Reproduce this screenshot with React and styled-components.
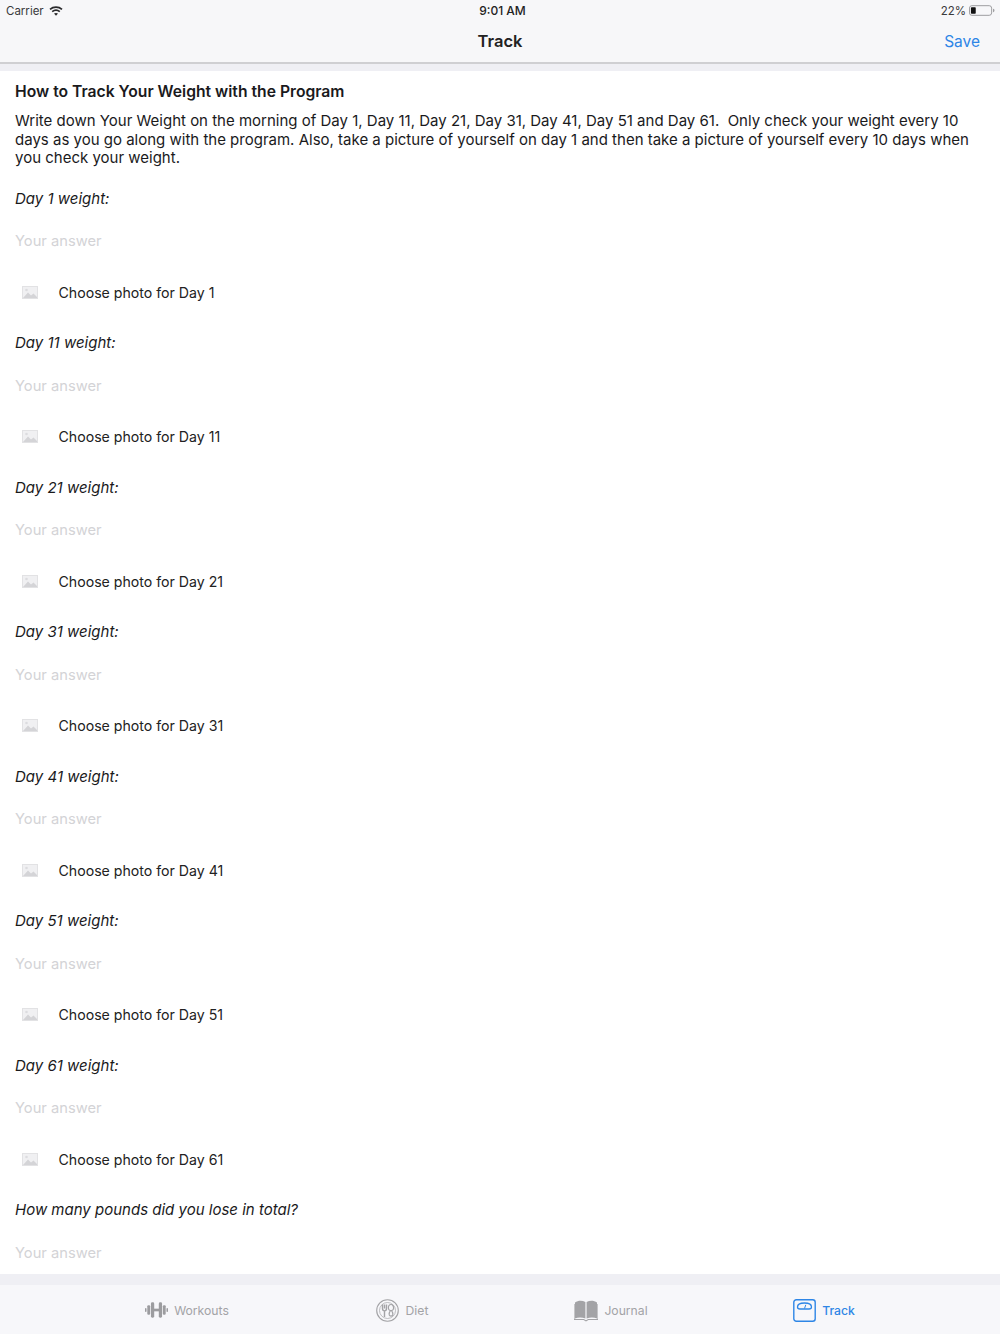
import React from 'react';
import styled, { createGlobalStyle } from 'styled-components';

const Global = createGlobalStyle`
  html, body { margin: 0; padding: 0; background: #fff; }
  * { box-sizing: border-box; }
`;

const Page = styled.div`
  width: 1000px;
  height: 1334px;
  display: flex;
  flex-direction: column;
  overflow: hidden;
  font-family: Inter, "Liberation Sans", sans-serif;
  color: #1a1a1c;
`;

const TopBar = styled.header`
  height: 64px;
  flex: none;
  background: #f7f7f9;
  border-bottom: 2px solid #cfcfd2;
`;

const StatusBar = styled.div`
  height: 20px;
  padding: 1px 5px 0 6px;
  display: grid;
  grid-template-columns: 1fr auto 1fr;
  align-items: center;
  font-size: 11.5px;
  color: #3a3a3c;
`;

const StatusLeft = styled.div`
  display: flex;
  align-items: center;
  gap: 5px;
`;

const StatusTime = styled.div`
  font-size: 12px;
  font-weight: 500;
  color: #222;
  padding-left: 4px;
`;

const StatusRight = styled.div`
  display: flex;
  justify-content: flex-end;
  align-items: center;
  gap: 3px;
`;

const NavRow = styled.div`
  height: 42px;
  padding: 0 20px;
  display: grid;
  grid-template-columns: 1fr auto 1fr;
  align-items: center;
`;

const NavTitle = styled.div`
  font-size: 16.5px;
  font-weight: 600;
  color: #222;
`;

const SaveLink = styled.div`
  justify-self: end;
  font-size: 15.5px;
  color: #2e86e6;
`;

const Band = styled.div`
  height: ${(p) => p.$h}px;
  flex: none;
  background: #efeff4;
`;

const Content = styled.main`
  flex: 1;
  min-height: 0;
  padding: 0 15px;
  overflow: hidden;
  background: #fff;
`;

const Heading = styled.h1`
  margin: 0;
  height: 40px;
  display: flex;
  align-items: center;
  font-size: 15.7px;
  font-weight: 600;
  color: #1a1a1c;
`;

const Intro = styled.p`
  margin: 0;
  padding-top: 1px;
  font-size: 15px;
  line-height: 18.5px;
  height: 65.5px;
  width: 960px;
`;

const Question = styled.div`
  height: 43px;
  display: flex;
  align-items: center;
  font-size: 15px;
  font-style: italic;
`;

const Answer = styled.div`
  height: 43px;
  display: flex;
  align-items: center;
  font-size: 14.7px;
  color: #d3d3d6;
`;

const PhotoRow = styled.div`
  height: 58.5px;
  padding: 1px 0 0 7px;
  display: flex;
  align-items: center;
  gap: 20.5px;
  font-size: 14.15px;
  color: #222;
`;

const TabBar = styled.nav`
  height: 49px;
  flex: none;
  background: #f7f7fa;
  display: grid;
  grid-template-columns: repeat(4, 1fr);
  padding: 1px 71px 0 81px;
`;

const Tab = styled.div`
  display: flex;
  align-items: center;
  justify-content: center;
  padding-left: ${(p) => p.$nudge || 0}px;
  gap: ${(p) => p.$gap}px;
  font-size: 12.2px;
  font-weight: ${(p) => (p.$active ? 500 : 400)};
  color: ${(p) => (p.$active ? '#2e86e6' : '#a3a3a6')};
`;

const Wifi = () => (
  <svg width="14" height="10" viewBox="0 0 14 10" fill="none" stroke="#2a2a2c" strokeWidth="1.7">
    <path d="M1 3.4C4.4 .4 9.6 .4 13 3.4" />
    <path d="M3.2 5.6c2.2-1.800 5.400-1.800 7.600 0" />
    <path d="M7 9.800 5 7.600c1.100-.9 2.900-.9 4 0z" fill="#2a2a2c" stroke="none" />
  </svg>
);

const Battery = () => (
  <svg width="26" height="11" viewBox="0 0 27 11">
    <rect x=".5" y=".5" width="23" height="10" rx="2.5" fill="none" stroke="#9a9a9d" />
    <rect x="2" y="2" width="5" height="7" rx=".8" fill="#111" />
    <path d="M25 3.800c1 .2 1.400.8 1.400 1.700s-.4 1.500-1.400 1.700z" fill="#9a9a9d" />
  </svg>
);

const PhotoIcon = () => (
  <svg width="16" height="13" viewBox="0 0 16 13">
    <rect x=".5" y=".5" width="15" height="12" fill="#f0f0f2" stroke="#e2e2e4" />
    <path d="M1 12 6 6.500 9 9.500 11.500 7.500 15 11v1z" fill="#d4d4d7" />
    <circle cx="4.500" cy="4" r="1.300" fill="#dcdcdf" />
  </svg>
);

const DumbbellIcon = () => (
  <svg width="23" height="20" viewBox="0 0 24 20" fill="#9c9c9f">
    <rect x="0" y="8" width="1.600" height="4" rx=".8" />
    <rect x="2.400" y="5" width="3" height="10" rx="1.200" />
    <rect x="6.200" y="2" width="3.400" height="16" rx="1.400" />
    <rect x="9" y="8.600" width="6" height="2.800" />
    <rect x="14.400" y="2" width="3.400" height="16" rx="1.400" />
    <rect x="18.600" y="5" width="3" height="10" rx="1.200" />
    <rect x="22.400" y="8" width="1.600" height="4" rx=".8" />
  </svg>
);

const PlateIcon = () => (
  <svg width="23" height="23" viewBox="0 0 23 23" fill="none" stroke="#a3a3a6">
    <circle cx="11.500" cy="11.500" r="10.800" strokeWidth="1.100" />
    <circle cx="11.500" cy="11.500" r="8" strokeWidth=".7" />
    <path d="M6.500 5.500v4c0 1.600 1 2.300 2 2.400V18M8.500 5.500v4M10.500 5.500v4c0 1.600-1 2.300-2 2.400" strokeWidth="1.400" />
    <path d="M15 5.500c-1.800 0-2.600 1.800-2.600 3.400 0 1.400.8 2.400 2 2.700-.9 1.200-1.600 2.600-1.100 4.400.5 1.400 2.900 1.400 3.400 0 .5-1.800-.2-3.200-1.100-4.400 1.200-.3 2-1.300 2-2.700 0-1.600-.8-3.400-2.600-3.400z" strokeWidth="1.200" />
  </svg>
);

const BookIcon = () => (
  <svg width="24" height="23" viewBox="0 0 24 23" fill="#a3a3a6">
    <path d="M1 3.500C4 1.500 8 1.300 11.400 3v16.500C8 18 4 18 1 19.500z" />
    <path d="M23 3.500c-3-2-7-2.200-10.400-.5v16.500c3.400-1.500 7.400-1.500 10.400 0z" />
    <path d="M0 5v16h9.500l2.500 1.500 2.500-1.500H24V5h-.6v15h-9.200L12 21.300 9.800 20H.6V5z" />
  </svg>
);

const ScaleIcon = () => (
  <svg width="23" height="23" viewBox="0 0 23 23" fill="none" stroke="#2e86e6">
    <rect x=".8" y=".8" width="21.400" height="21.400" rx="2.500" strokeWidth="1.400" />
    <path d="M4.500 8c0-2.400 3-4 7-4s7 1.600 7 4c0 1.300-1.200 2-2.500 2h-9C5.700 10 4.500 9.300 4.500 8z" strokeWidth="1.300" />
    <path d="M11.500 9.500 12.800 5.800" strokeWidth="1" />
  </svg>
);

const days = [1, 11, 21, 31, 41, 51, 61];

const tabs = [
  { label: 'Workouts', icon: <DumbbellIcon />, gap: 6 },
  { label: 'Diet', icon: <PlateIcon />, gap: 7, nudge: 6 },
  { label: 'Journal', icon: <BookIcon />, gap: 6 },
  { label: 'Track', icon: <ScaleIcon />, gap: 6, nudge: 2, active: true },
];

export default function App() {
  return (
    <Page>
      <Global />
      <TopBar>
        <StatusBar>
          <StatusLeft>Carrier <Wifi /></StatusLeft>
          <StatusTime>9:01 AM</StatusTime>
          <StatusRight>22% <Battery /></StatusRight>
        </StatusBar>
        <NavRow>
          <span />
          <NavTitle>Track</NavTitle>
          <SaveLink>Save</SaveLink>
        </NavRow>
      </TopBar>
      <Band $h={7} />
      <Content>
        <Heading>How to Track Your Weight with the Program</Heading>
        <Intro>
          Write down Your Weight on the morning of Day 1, Day 11, Day 21, Day 31, Day 41, Day 51 and Day 61.&nbsp; Only check your weight every 10 days as you go along with the program. Also, take a picture of yourself on day 1 and then take a picture of yourself every 10 days when you check your weight.
        </Intro>
        {days.map((day) => (
          <div key={day}>
            <Question>Day {day} weight:</Question>
            <Answer>Your answer</Answer>
            <PhotoRow>
              <PhotoIcon />
              Choose photo for Day {day}
            </PhotoRow>
          </div>
        ))}
        <Question>How many pounds did you lose in total?</Question>
        <Answer>Your answer</Answer>
      </Content>
      <Band $h={11} />
      <TabBar>
        {tabs.map((t) => (
          <Tab key={t.label} $active={t.active} $gap={t.gap} $nudge={t.nudge}>
            {t.icon}
            {t.label}
          </Tab>
        ))}
      </TabBar>
    </Page>
  );
}
